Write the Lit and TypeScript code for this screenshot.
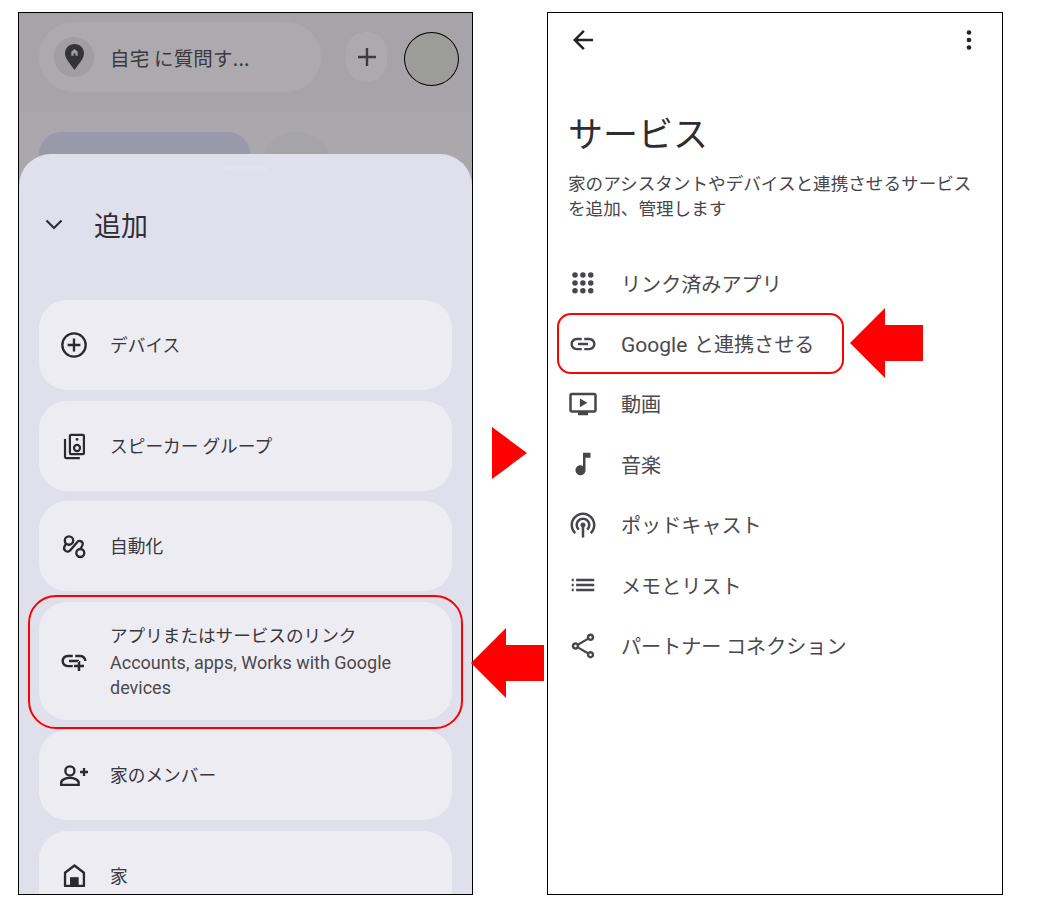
import { LitElement, html, css, svg } from "lit";
import { customElement } from "lit/decorators.js";

const P = {
  addLink: "M8 11h8v2H8zm12.1 1H22c0-2.76-2.24-5-5-5h-4v1.9h4c1.71 0 3.1 1.39 3.1 3.1zM3.9 12c0-1.71 1.39-3.1 3.1-3.1h4V7H7c-2.76 0-5 2.24-5 5s2.24 5 5 5h4v-1.9H7c-1.71 0-3.1-1.39-3.1-3.1zM17 12h-2v3h-3v2h3v3h2v-3h3v-2h-3z",
  link: "M3.9 12c0-1.71 1.39-3.1 3.1-3.1h4V7H7c-2.76 0-5 2.24-5 5s2.24 5 5 5h4v-1.9H7c-1.71 0-3.1-1.39-3.1-3.1zM8 13h8v-2H8v2zm9-6h-4v1.9h4c1.71 0 3.1 1.39 3.1 3.1s-1.39 3.1-3.1 3.1h-4V17h4c2.76 0 5-2.24 5-5s-2.24-5-5-5z",
  video: "M21 3H3c-1.11 0-2 .89-2 2v12c0 1.1.89 2 2 2h5v2h8v-2h5c1.1 0 1.99-.9 1.99-2L23 5c0-1.11-.9-2-2-2zm0 14H3V5h18v12zM9.5 7.5v7l6-3.5z",
  music: "M12 3v10.55c-.59-.34-1.27-.55-2-.55-2.21 0-4 1.79-4 4s1.79 4 4 4 4-1.79 4-4V7h4V3h-6z",
  podcast: "M14 12c0 .74-.4 1.38-1 1.72V22h-2v-8.28c-.6-.35-1-.98-1-1.72 0-1.1.9-2 2-2s2 .9 2 2zM12 6c-3.31 0-6 2.69-6 6 0 1.74.75 3.31 1.94 4.4l1.42-1.42C8.53 14.25 8 13.19 8 12c0-2.21 1.79-4 4-4s4 1.79 4 4c0 1.19-.53 2.25-1.36 2.98l1.42 1.42C17.25 15.31 18 13.74 18 12c0-3.31-2.69-6-6-6zM12 2C6.48 2 2 6.48 2 12c0 2.85 1.2 5.41 3.11 7.24l1.42-1.42C4.98 16.36 4 14.29 4 12c0-4.41 3.59-8 8-8s8 3.59 8 8c0 2.29-.98 4.36-2.53 5.82l1.42 1.42C20.8 17.41 22 14.85 22 12c0-5.52-4.48-10-10-10z",
  list: "M3 13h1.6v-2H3v2zm0 4h1.6v-2H3v2zm0-8h1.6V7H3v2zm3.500 4H21v-2H6.500v2zm0 4H21v-2H6.500v2zM6.500 7v2H21V7H6.500z",
  share: "M18 16.08c-.76 0-1.44.3-1.96.77L8.91 12.7c.05-.23.09-.46.09-.7s-.04-.47-.09-.7l7.05-4.11c.54.5 1.25.81 2.04.81 1.66 0 3-1.34 3-3s-1.34-3-3-3-3 1.34-3 3c0 .24.04.47.09.7L8.04 9.81C7.5 9.31 6.79 9 6 9c-1.66 0-3 1.34-3 3s1.34 3 3 3c.79 0 1.5-.31 2.04-.81l7.12 4.16c-.05.21-.08.43-.08.65 0 1.61 1.31 2.92 2.92 2.92 1.61 0 2.92-1.31 2.92-2.92s-1.31-2.92-2.92-2.92zM18 4c.55 0 1 .45 1 1s-.45 1-1 1-1-.45-1-1 .45-1 1-1zM6 13c-.55 0-1-.45-1-1s.45-1 1-1 1 .45 1 1-.45 1-1 1zm12 7.02c-.55 0-1-.45-1-1s.45-1 1-1 1 .45 1 1-.45 1-1 1z",
  back: "M20 11H7.83l5.59-5.59L12 4l-8 8 8 8 1.41-1.41L7.83 13H20v-2z",
};

const ic = (size: number, body: unknown) => html`<svg class="ic" width=${size} height=${size} viewBox="0 0 24 24" fill="currentColor">${body}</svg>`;
const fp = (d: string) => svg`<path d=${d} />`;
const st = (body: unknown) => svg`<g fill="none" stroke="currentColor" stroke-width="2">${body}</g>`;

const dots = svg`${[0, 1, 2].flatMap((c) => [0, 1, 2].map((r) => svg`<circle cx=${5.6 + c * 6.3} cy=${5.6 + r * 6.3} r="2.2" />`))}`;

const leftIcons = {
  add: st(svg`<circle cx="12" cy="12" r="10" /><path d="M12 6.500v11M6.500 12h11" />`),
  speaker: svg`<g fill="none" stroke="currentColor" stroke-width="1.9"><rect x="8.500" y="2.500" width="12" height="16.400" rx="1" /><circle cx="14.600" cy="13.700" r="2.600" /><path d="M4.300 6v15.300a1 1 0 0 0 1 1H17" /></g><circle cx="14.600" cy="6.400" r="1.200" />`,
  auto: st(svg`<circle cx="7.700" cy="7.300" r="3.600" /><circle cx="17.400" cy="18" r="3.400" /><path d="M5 10.300 3.800 12.500a3 3 0 0 0 4.700 3.500l6-7a2.800 2.800 0 0 1 5 .5c.5 2-1 3.500-2.100 5.100" />`),
  person: st(svg`<circle cx="8.500" cy="8.500" r="3.900" /><path d="M1 20.500v-1.700c0-2.900 4.200-4.300 7.500-4.300s7.500 1.400 7.500 4.300v1.700z" /><path d="M20.600 6v6.800M17.200 9.400H24" />`),
  home: svg`<path d="M12.400 3 4.300 9.200V20.500h16.200V9.200z" fill="none" stroke="currentColor" stroke-width="2" stroke-linejoin="round" /><rect x="8.600" y="13" width="7.400" height="7.500" />`,
};

@customElement("app-root")
export class AppRoot extends LitElement {
  static styles = css`
    :host {
      display: block;
      font-family: "Noto Sans CJK JP", "Noto Sans", sans-serif;
    }
    .page {
      position: relative;
      display: flex;
      gap: 74px;
      width: 1058px;
      height: 906px;
      padding: 12px 0 0 18px;
      box-sizing: border-box;
      background: #fff;
    }
    .phone {
      position: relative;
      box-sizing: border-box;
      height: 883px;
      border: 1px solid #000;
      overflow: hidden;
      flex: none;
    }
    .left { width: 455px; background: #aaa8ad; }
    .right { width: 456px; background: #fff; color: #47464a; }
    .ic { display: block; flex: none; }

    .top {
      display: flex;
      align-items: center;
      height: 99px;
      padding: 9px 13px 20px 20px;
      background: #a6a4a9;
      box-sizing: border-box;
    }
    .search {
      display: flex;
      align-items: center;
      width: 282px;
      height: 70px;
      border-radius: 35px;
      background: #acaaaf;
      padding-left: 15px;
      box-sizing: border-box;
      color: #3a393d;
      font-size: 19.500px;
      letter-spacing: 0.2px;
    }
    .pin {
      display: flex;
      align-items: center;
      justify-content: center;
      width: 40px;
      height: 40px;
      border-radius: 50%;
      background: #a09ea3;
      color: #343336;
      margin-right: 16px;
    }
    .plus {
      display: flex;
      align-items: center;
      justify-content: center;
      width: 41px;
      height: 50px;
      margin: 0 17px 0 25px;
      border-radius: 20px;
      background: #acaaaf;
      color: #3c3b3f;
    }
    .avatar {
      width: 55px;
      height: 54px;
      margin-top: 3px;
      box-sizing: border-box;
      border: 1px solid #000;
      border-radius: 50%;
      background: #9c9c9a;
    }
    .chips {
      display: flex;
      gap: 13px;
      padding: 20px 20px 0;
    }
    .chip { width: 211px; height: 60px; border-radius: 22px; background: #9a99a9; }
    .chip2 { width: 67px; height: 60px; border-radius: 50%; background: #a5a4a7; }

    .sheet {
      position: absolute;
      left: 0;
      right: 0;
      top: 141px;
      bottom: 0;
      border-radius: 32px 32px 0 0;
      background: #e0dfec;
      color: #3a393e;
      padding: 0 20px;
    }
    .handle {
      width: 41px;
      height: 5px;
      margin: 12px auto 0;
      border-radius: 3px;
      background: #e3e2ee;
    }
    .head {
      display: flex;
      align-items: center;
      height: 60px;
      margin: 23px 0 46px;
      gap: 28px;
      padding-left: 3px;
      font-size: 27px;
      color: #2f2e33;
    }
    .cards { display: flex; flex-direction: column; gap: 10.6px; }
    .card {
      display: flex;
      align-items: center;
      gap: 22px;
      height: 90px;
      flex: none;
      padding-left: 21px;
      box-sizing: border-box;
      border-radius: 28px;
      background: #eeecf3;
      font-size: 17.7px;
      color: #38373c;
    }
    .card > span { margin-top: -2px; }
    .card.tall { height: 118px; }
    .card .ic { color: #2a292e; }
    .card .wide { margin: 0 -1px; }
    .sub {
      font-family: Roboto, "Noto Sans", sans-serif;
      font-size: 18px;
      line-height: 25px;
      color: #4a494e;
      width: 300px;
    }
    .t { line-height: 30px; font-size: 17.6px; margin-top: -1px; }

    .bar {
      display: flex;
      justify-content: space-between;
      align-items: center;
      padding: 12px 21px 0 20px;
      color: #232226;
    }
    .title {
      font-size: 35px;
      line-height: 50px;
      margin: 52px 0 0 20px;
      color: #2e2d31;
      font-weight: 400;
    }
    .desc {
      font-size: 17.6px;
      line-height: 25px;
      margin: 13px 0 0 20px;
      width: 410px;
      color: #47464a;
    }
    .rows { display: flex; flex-direction: column; margin-top: 33px; }
    .row {
      display: flex;
      align-items: center;
      height: 60.4px;
      padding-left: 20px;
      gap: 23px;
      font-size: 20.1px;
      color: #4a494d;
    }
    .row .ic { color: #47464a; }
    .latin { font-family: Roboto, "Noto Sans CJK JP", sans-serif; font-size: 21px; margin-right: 2px; }

    .ring {
      position: absolute;
      box-sizing: border-box;
      border: 2px solid #f00;
      background: transparent;
    }
    .ring1 { left: 28px; top: 595px; width: 435px; height: 134px; border-radius: 28px; }
    .ring2 { left: 557px; top: 313px; width: 287px; height: 61px; border-radius: 14px; }
    .shape { position: absolute; display: block; fill: #f00; }
    .a1 { left: 471px; top: 628px; }
    .a2 { left: 850px; top: 308px; }
    .a3 { left: 492px; top: 427px; }
  `;

  private arrow(cls: string) {
    return html`<svg class="shape ${cls}" width="73" height="70" viewBox="0 0 73 70"><polygon points="0,35 35,0 35,17 73,17 73,53 35,53 35,70" /></svg>`;
  }

  render() {
    const plusSvg = html`<svg class="ic" width="24" height="24" viewBox="0 0 24 24" fill="none" stroke="currentColor" stroke-width="2.400"><path d="M12 3v18M3 12h18" /></svg>`;
    const pin = html`<svg class="ic" width="19" height="26" viewBox="0 0 19 26" fill="currentColor"><path fill-rule="evenodd" d="M9.500 0C4.200 0 0 4.100 0 9.300c0 5.500 5.500 11 9.500 16.700 4-5.700 9.500-11.200 9.500-16.700C19 4.100 14.800 0 9.500 0zM9.500 5 6.300 7.700v4h2.200V9.500h2v2.200h2.200v-4z" /></svg>`;
    return html`
      <div class="page">
        <div class="phone left">
          <div class="top">
            <div class="search">
              <div class="pin">${pin}</div>
              <span>自宅 に質問す...</span>
            </div>
            <div class="plus">${plusSvg}</div>
            <div class="avatar"></div>
          </div>
          <div class="chips"><div class="chip"></div><div class="chip2"></div></div>
          <div class="sheet">
            <div class="handle"></div>
            <div class="head">
              <svg class="ic" width="24" height="24" viewBox="0 0 24 24" fill="none" stroke="currentColor" stroke-width="2.200"><path d="M4.500 8.500 12 16l7.500-7.500" /></svg>
              <span>追加</span>
            </div>
            <div class="cards">
              <div class="card">${ic(28, leftIcons.add)}<span>デバイス</span></div>
              <div class="card">${ic(28, leftIcons.speaker)}<span>スピーカー グループ</span></div>
              <div class="card">${ic(28, leftIcons.auto)}<span>自動化</span></div>
              <div class="card tall">
                <svg class="ic wide" width="30" height="30" viewBox="0 0 24 24" fill="currentColor"><path d=${P.addLink} /></svg>
                <div><div class="t">アプリまたはサービスのリンク</div><div class="sub">Accounts, apps, Works with Google devices</div></div>
              </div>
              <div class="card">${ic(28, leftIcons.person)}<span>家のメンバー</span></div>
              <div class="card">${ic(28, leftIcons.home)}<span>家</span></div>
            </div>
          </div>
        </div>

        <div class="phone right">
          <div class="bar">
            ${ic(30, fp(P.back))}
            ${ic(24, svg`<circle cx="12" cy="4.500" r="2.300" /><circle cx="12" cy="12" r="2.300" /><circle cx="12" cy="19.500" r="2.300" />`)}
          </div>
          <h1 class="title">サービス</h1>
          <div class="desc">家のアシスタントやデバイスと連携させるサービスを追加、管理します</div>
          <div class="rows">
            <div class="row">${ic(30, dots)}<span>リンク済みアプリ</span></div>
            <div class="row">${ic(30, fp(P.link))}<span><span class="latin">Google</span> と連携させる</span></div>
            <div class="row">${ic(30, fp(P.video))}<span>動画</span></div>
            <div class="row">${ic(30, fp(P.music))}<span>音楽</span></div>
            <div class="row">${ic(30, fp(P.podcast))}<span>ポッドキャスト</span></div>
            <div class="row">${ic(30, fp(P.list))}<span>メモとリスト</span></div>
            <div class="row">${ic(30, fp(P.share))}<span>パートナー コネクション</span></div>
          </div>
        </div>

        <div class="ring ring1"></div>
        <div class="ring ring2"></div>
        ${this.arrow("a1")}
        ${this.arrow("a2")}
        <svg class="shape a3" width="35" height="52" viewBox="0 0 35 52"><polygon points="0,0 35,26 0,52" /></svg>
      </div>
    `;
  }
}
